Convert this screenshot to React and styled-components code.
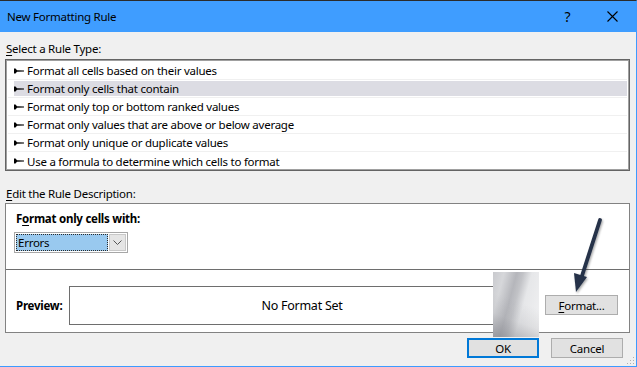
import React from "react";
import styled, { createGlobalStyle } from "styled-components";

const Global = createGlobalStyle`
  * { box-sizing: border-box; }
  html, body { margin: 0; padding: 0; background: #f0f0f0; }
  body {
    font-family: "Noto Sans", "Open Sans", sans-serif;
    font-size: 11.5px;
    letter-spacing: -0.25px;
    color: #000;
  }
`;

const Dialog = styled.div`
  position: relative;
  width: 637px;
  height: 367px;
  display: flex;
  flex-direction: column;
  background: #f0f0f0;
  border-top: 1px solid #2b2b2b;
  border-right: 1px solid #3d9bff;
  border-bottom: 1px solid #3d9bff;
  overflow: hidden;
`;

const TitleBar = styled.div`
  height: 31px;
  flex: none;
  background: #3f9dff;
  display: flex;
  align-items: center;
  padding-left: 7px;
`;

const Title = styled.div`
  flex: 1;
  font-size: 11.5px;
`;

const TitleButton = styled.div`
  width: 45px;
  height: 31px;
  display: flex;
  align-items: center;
  justify-content: center;
  font-size: 14px;
  margin-right: ${(p) => p.$mr || 0}px;
`;

const Body = styled.div`
  flex: 1;
  display: flex;
  flex-direction: column;
  padding: 0 6px 0 5px;
`;

const Label = styled.div`
  height: 14px;
  line-height: 14px;
  padding-left: ${(p) => (p.$flush ? 0 : 1)}px;
  margin-top: ${(p) => p.$mt}px;
  margin-bottom: ${(p) => p.$mb}px;
  font-weight: ${(p) => (p.$bold ? 700 : 400)};
  u { text-decoration: underline; text-underline-offset: 2px; }
`;

const ListBox = styled.div`
  height: 112px;
  background: #fff;
  border: 1px solid #646464;
  box-shadow: inset 0 0 0 1px #a0a0a0;
  padding: 2px 2px 0 2px;
  display: flex;
  flex-direction: column;
`;

const Row = styled.div`
  height: 18px;
  flex: none;
  display: flex;
  align-items: center;
  gap: 3px;
  padding-left: 6px;
  background: ${(p) => (p.$selected ? "#dcdce3" : "transparent")};
  background-clip: content-box;
  padding-top: ${(p) => (p.$selected ? 1 : 0)}px;
  padding-bottom: ${(p) => (p.$selected ? 1 : 0)}px;
  border-bottom: 1px solid #f0f0f0;
  &:last-child { border-bottom: none; }
`;

const Bullet = () => (
  <svg width="10" height="6" viewBox="0 0 10 6" style={{ flex: "none" }}>
    <polygon points="0,0.5 1.5,0.5 3,2.2 10,2.6 10,3.4 3,3.8 1.5,5.5 0,5.5" fill="#000" />
  </svg>
);

const Panel = styled.div`
  height: 130px;
  background: #fff;
  border: 1px solid #828282;
  display: flex;
  flex-direction: column;
`;

const PanelTop = styled.div`
  height: 66px;
  border-bottom: 1px solid #6e6e6e;
  padding: 8px 0 0 10px;
  display: flex;
  flex-direction: column;
  gap: 6px;
`;

const Combo = styled.div`
  width: 114px;
  height: 21px;
  margin-left: -2px;
  border: 1px solid #a7a7a7;
  display: flex;
  padding: 1px;
  gap: 1px;
`;

const ComboValue = styled.div`
  flex: 1;
  background: #99c9ef;
  outline: 1px dotted #2a2a2a;
  outline-offset: -1px;
  padding-left: 2px;
  line-height: 17px;
`;

const ComboArrow = styled.div`
  width: 17px;
  background: #e5e5e5;
  border: 1px solid #c8c8c8;
  display: flex;
  align-items: center;
  justify-content: center;
`;

const PanelBottom = styled.div`
  flex: 1;
  display: flex;
  align-items: flex-start;
  padding: 16px 0 0 10px;
`;

const PreviewLabel = styled.div`
  font-weight: 700;
  width: 53px;
  line-height: 39px;
`;

const PreviewBox = styled.div`
  width: 466px;
  height: 39px;
  border: 1px solid #6e6e6e;
  display: flex;
  align-items: center;
  justify-content: center;
  font-size: 12.5px;
`;

const Button = styled.button`
  font-family: inherit;
  font-size: 11.5px;
  letter-spacing: -0.25px;
  color: #000;
  width: ${(p) => p.$w}px;
  height: ${(p) => p.$h}px;
  background: #e1e1e1;
  border: ${(p) => (p.$default ? "2px solid #0078d7" : "1px solid #adadad")};
  padding: 0;
  margin-left: ${(p) => p.$ml || 0}px;
  margin-top: ${(p) => p.$mt || 0}px;
  u { text-decoration: underline; text-underline-offset: 2px; }
`;

const Footer = styled.div`
  display: flex;
  justify-content: flex-end;
  gap: 12px;
  padding-right: 7px;
  margin-top: 5px;
`;

const Blur = styled.div`
  position: absolute;
  left: 493px;
  top: 271px;
  width: 46px;
  height: 65px;
  background:
    linear-gradient(20deg, rgba(120, 121, 128, 0.55) 0%, rgba(160, 161, 166, 0.2) 30%, rgba(255, 255, 255, 0) 55%),
    linear-gradient(105deg, #c9cace 0%, #d6d7da 18%, #b5b6bb 38%, #c2c3c7 48%, #e6e7e9 62%, #f2f2f3 100%);
  filter: blur(0.6px);
`;

const Grip = styled.div`
  position: absolute;
  right: 2px;
  bottom: 2px;
  width: 8px;
  height: 8px;
  background-image: radial-gradient(circle, #b0b0b0 0.9px, transparent 1px);
  background-size: 3px 3px;
  clip-path: polygon(100% 0, 100% 100%, 0 100%);
`;

const Pointer = styled.svg`
  position: absolute;
  left: 565px;
  top: 212px;
  overflow: visible;
`;

const rules = [
  "Format all cells based on their values",
  "Format only cells that contain",
  "Format only top or bottom ranked values",
  "Format only values that are above or below average",
  "Format only unique or duplicate values",
  "Use a formula to determine which cells to format",
];

export default function App() {
  return (
    <Dialog>
      <Global />
      <TitleBar>
        <Title>New Formatting Rule</Title>
        <TitleButton>?</TitleButton>
        <TitleButton $mr={1}>
          <svg width="11" height="11" viewBox="0 0 11 11">
            <path d="M0.5 0.5 L10.5 10.5 M10.5 0.5 L0.5 10.5" stroke="#000" strokeWidth="1.1" />
          </svg>
        </TitleButton>
      </TitleBar>
      <Body>
        <Label $mt={10} $mb={3}>
          <u>S</u>elect a Rule Type:
        </Label>
        <ListBox>
          {rules.map((r, i) => (
            <Row key={r} $selected={i === 1}>
              <Bullet />
              {r}
            </Row>
          ))}
        </ListBox>
        <Label $mt={16} $mb={2}>
          <u>E</u>dit the Rule Description:
        </Label>
        <Panel>
          <PanelTop>
            <Label $bold $flush $mt={0} $mb={0}>
              F<u>o</u>rmat only cells with:
            </Label>
            <Combo>
              <ComboValue>Errors</ComboValue>
              <ComboArrow>
                <svg width="9" height="5" viewBox="0 0 9 5">
                  <path d="M0.5 0.5 L4.5 4.5 L8.5 0.5" stroke="#555" fill="none" strokeWidth="1" />
                </svg>
              </ComboArrow>
            </Combo>
          </PanelTop>
          <PanelBottom>
            <PreviewLabel>Preview:</PreviewLabel>
            <PreviewBox>No Format Set</PreviewBox>
            <Button $w={73} $h={20} $ml={10} $mt={9}>
              <u>F</u>ormat...
            </Button>
          </PanelBottom>
        </Panel>
        <Footer>
          <Button $w={72} $h={20} $default>OK</Button>
          <Button $w={72} $h={20}>Cancel</Button>
        </Footer>
      </Body>
      <Blur />
      <Grip />
      <Pointer width="40" height="85" viewBox="0 0 40 85">
        <defs>
          <filter id="sh" x="-50%" y="-50%" width="200%" height="200%">
            <feDropShadow dx="1" dy="1.5" stdDeviation="1.2" floodColor="#000" floodOpacity="0.35" />
          </filter>
        </defs>
        <g filter="url(#sh)">
          <path d="M35 7 L16 66" stroke="#253248" strokeWidth="3.8" strokeLinecap="round" />
          <polygon points="9,60 22,64 11,79" fill="#253248" />
        </g>
      </Pointer>
    </Dialog>
  );
}
